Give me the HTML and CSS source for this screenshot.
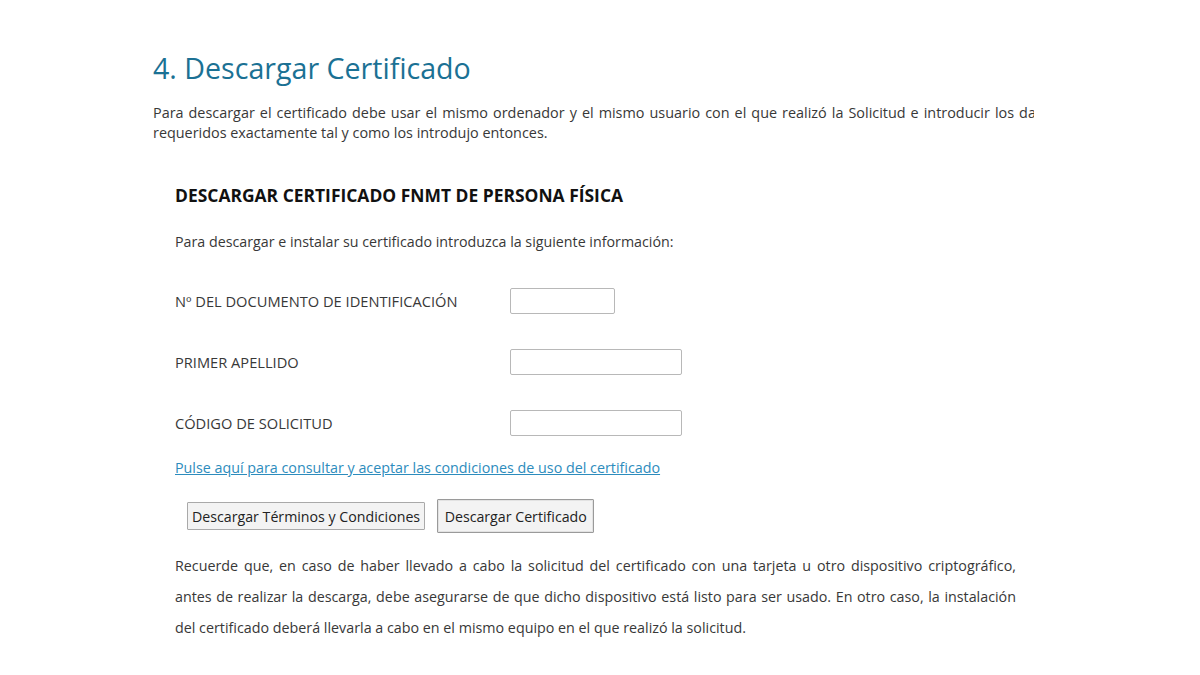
FILE: index.html
```html
<!DOCTYPE html>
<html lang="es">
<head>
<meta charset="utf-8">
<title>Descargar Certificado</title>
<link rel="stylesheet" href="styles.css">
</head>
<body>
<main class="page">
  <h1 class="title">4. Descargar Certificado</h1>
  <div class="intro-clip">
    <p class="intro"><span class="intro-first">Para descargar el certificado debe usar el mismo ordenador y el mismo usuario con el que realizó la Solicitud e introducir los datos</span><br>requeridos exactamente tal y como los introdujo entonces.</p>
  </div>
  <section class="box">
    <h2 class="box-title">DESCARGAR CERTIFICADO FNMT DE PERSONA FÍSICA</h2>
    <p class="box-lead">Para descargar e instalar su certificado introduzca la siguiente información:</p>
    <form class="form">
      <div class="row">
        <label class="label">Nº DEL DOCUMENTO DE IDENTIFICACIÓN</label>
        <input class="field field-short" type="text">
      </div>
      <div class="row">
        <label class="label">PRIMER APELLIDO</label>
        <input class="field" type="text">
      </div>
      <div class="row">
        <label class="label">CÓDIGO DE SOLICITUD</label>
        <input class="field" type="text">
      </div>
    </form>
    <a class="link" href="#">Pulse aquí para consultar y aceptar las condiciones de uso del certificado</a>
    <div class="buttons">
      <button class="btn" type="button">Descargar Términos y Condiciones</button>
      <button class="btn btn-main" type="button">Descargar Certificado</button>
    </div>
    <div class="note">
      <span class="note-line">Recuerde que, en caso de haber llevado a cabo la solicitud del certificado con una tarjeta u otro dispositivo criptográfico,</span>
      <span class="note-line">antes de realizar la descarga, debe asegurarse de que dicho dispositivo está listo para ser usado. En otro caso, la instalación</span>
      <span class="note-line note-last">del certificado deberá llevarla a cabo en el mismo equipo en el que realizó la solicitud.</span>
    </div>
  </section>
</main>
</body>
</html>
```

FILE: styles.css
```css
html, body {
  margin: 0;
  padding: 0;
  background: #ffffff;
}
body {
  font-family: "Open Sans", "Noto Sans", "Liberation Sans", sans-serif;
  color: #383838;
}
.page {
  padding: 48px 0 0 153px;
}
.title {
  margin: 0;
  font-weight: 400;
  font-size: 28.6px;
  line-height: 40px;
  color: #1b7194;
}
.intro-clip {
  width: 881px;
  overflow: hidden;
  margin-top: 15px;
}
.intro {
  margin: 0;
  white-space: nowrap;
  font-size: 14.4px;
  line-height: 20px;
}
.intro-first {
  word-spacing: 1.3px;
}
.box {
  padding: 40px 0 0 22px;
  width: 841px;
}
.box-title {
  margin: 0;
  font-size: 17.45px;
  font-weight: 700;
  line-height: 24px;
  color: #111111;
}
.box-lead {
  margin: 25px 0 0;
  font-size: 14.25px;
  line-height: 20px;
}
.form {
  margin-top: 36px;
  display: flex;
  flex-direction: column;
  gap: 35px;
}
.row {
  display: flex;
  align-items: center;
  height: 26px;
}
.label {
  width: 335px;
  font-size: 14.65px;
}
.field {
  box-sizing: border-box;
  width: 172px;
  height: 26px;
  border: 1px solid #b8b8b8;
  border-radius: 2px;
  background: #ffffff;
  margin: 0;
}
.field-short {
  width: 105px;
}
.link {
  display: block;
  margin-top: 22px;
  font-size: 14.3px;
  line-height: 20px;
  color: #2d8cbd;
  text-decoration: underline;
}
.buttons {
  display: flex;
  align-items: center;
  gap: 12px;
  margin: 21px 0 0 12px;
}
.btn {
  font-family: inherit;
  font-size: 14.2px;
  color: #222222;
  background: #f3f3f3;
  border: 1px solid #a9a9a9;
  border-radius: 1px;
  height: 28px;
  padding: 0 4px;
}
.btn-main {
  height: 34px;
  padding: 0 6.5px;
  border: 1px solid #9a9a9a;
  box-shadow: inset 0 0 0 1px #e2e2e2;
}
.note {
  margin-top: 17px;
  font-size: 14.3px;
  line-height: 31px;
}
.note-line {
  display: block;
  text-align: justify;
  text-align-last: justify;
}
.note-last {
  text-align-last: left;
}
```
